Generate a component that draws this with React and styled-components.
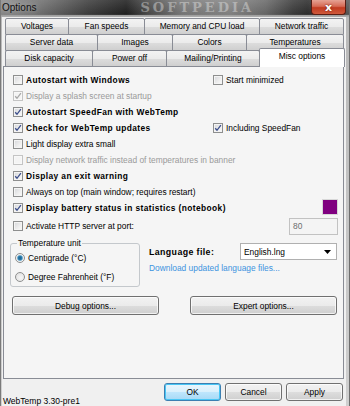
import styled, { createGlobalStyle } from 'styled-components';

const GlobalStyle = createGlobalStyle`
  html, body {
    margin: 0;
    padding: 0;
  }
  body {
    width: 350px;
    height: 406px;
    overflow: hidden;
    font-family: "Liberation Sans", Arial, sans-serif;
    font-size: 8.4px;
    color: #000;
    background: #9a9a9a;
  }
`;

const tabRows = [
  [
    { label: 'Voltages', w: 64 },
    { label: 'Fan speeds', w: 77 },
    { label: 'Memory and CPU load', w: 116 },
    { label: 'Network traffic', w: 85 },
  ],
  [
    { label: 'Server data', w: 93 },
    { label: 'Images', w: 76 },
    { label: 'Colors', w: 75 },
    { label: 'Temperatures', w: 98 },
  ],
  [
    { label: 'Disk capacity', w: 88 },
    { label: 'Power off', w: 75 },
    { label: 'Mailing/Printing', w: 94 },
    { label: 'Misc options', w: 86, active: true },
  ],
];

const options = [
  { label: 'Autostart with Windows', bold: true, right: { label: 'Start minimized' } },
  { label: 'Display a splash screen at startup', checked: true, disabled: true },
  { label: 'Autostart SpeedFan with WebTemp', bold: true, checked: true },
  { label: 'Check for WebTemp updates', bold: true, checked: true, right: { label: 'Including SpeedFan', checked: true } },
  { label: 'Light display extra small' },
  { label: 'Display network traffic instead of temperatures in banner', disabled: true },
  { label: 'Display an exit warning', bold: true, checked: true },
  { label: 'Always on top (main window; requires restart)' },
  { label: 'Display battery status in statistics (notebook)', bold: true, checked: true, swatch: '#800080' },
  { label: 'Activate HTTP server at port:', port: '80' },
];

const Check = ({ checked, disabled, bold, label }) => (
  <CheckLabel $disabled={disabled} $bold={bold}>
    <Box $disabled={disabled}>
      {checked && (
        <svg width="8" height="8" viewBox="0 0 8 8">
          <path
            d="M1.2 4.3 L3 6.3 L6.9 1.2"
            fill="none"
            stroke={disabled ? '#a8a8a8' : '#3d4f8c'}
            strokeWidth="1.3"
          />
        </svg>
      )}
    </Box>
    {label}
  </CheckLabel>
);

const Radio = ({ checked, label }) => (
  <RadioRow>
    <RadioCircle $checked={checked} />
    {label}
  </RadioRow>
);

export default function App() {
  return (
    <>
      <GlobalStyle />
      <Window>
        <TitleBar>
          <Title>Options</Title>
          <Watermark>SOFTPEDIA</Watermark>
          <CloseButton>x</CloseButton>
        </TitleBar>
        <Client>
          <Tabs>
            {tabRows.map((row, i) => (
              <TabRow key={i}>
                {row.map(tab => (
                  <Tab key={tab.label} $w={tab.w} $active={tab.active}>
                    {tab.label}
                  </Tab>
                ))}
              </TabRow>
            ))}
          </Tabs>
          <Panel>
            <OptionList>
              {options.map(opt => (
                <OptionRow key={opt.label}>
                  <Check {...opt} />
                  {opt.right && <Check {...opt.right} />}
                  {opt.swatch && <Swatch $color={opt.swatch} />}
                  {opt.port && <PortInput>{opt.port}</PortInput>}
                </OptionRow>
              ))}
            </OptionList>
            <LowerSection>
              <GroupBox>
                <Legend>Temperature unit</Legend>
                <Radio checked label="Centigrade (°C)" />
                <Radio label="Degree Fahrenheit (°F)" />
              </GroupBox>
              <LanguageColumn>
                <LanguageRow>
                  <BoldLabel>Language file:</BoldLabel>
                  <Combo>
                    English.lng
                    <svg width="7" height="4" viewBox="0 0 7 4">
                      <path d="M0 0 H7 L3.5 4 Z" fill="#000" />
                    </svg>
                  </Combo>
                </LanguageRow>
                <Link>Download updated language files...</Link>
              </LanguageColumn>
            </LowerSection>
            <PanelButtons>
              <Button $w={147}>Debug options...</Button>
              <Button $w={147}>Expert options...</Button>
            </PanelButtons>
          </Panel>
          <BottomBar>
            <Status>WebTemp 3.30-pre1</Status>
            <DialogButtons>
              <Button $w={57} $h={18} $default>OK</Button>
              <Button $w={57} $h={18}>Cancel</Button>
              <Button $w={57} $h={18}>Apply</Button>
            </DialogButtons>
          </BottomBar>
        </Client>
      </Window>
    </>
  );
}

const Window = styled.div`
  width: 350px;
  height: 406px;
  box-sizing: border-box;
  display: flex;
  flex-direction: column;
  background: linear-gradient(to bottom, #b8b8b8, #cfcfcf);
  border-left: 1px solid #7a7a7a;
  border-right: 1px solid #6f6f6f;
`;

const TitleBar = styled.div`
  height: 17px;
  flex: none;
  display: flex;
  align-items: flex-start;
  overflow: hidden;
  background:
    linear-gradient(to bottom, rgba(255, 255, 255, 0.12), rgba(0, 0, 0, 0.05) 85%, #9a9a9a 88%, #b0b0b0),
    linear-gradient(to right, #8a8a8a 0%, #6f6f6f 12%, #3e3e3e 25%, #202020 36%, #4a4a4a 42%, #7a7a7a 52%, #858585 66%, #6a6a6a 76%, #3c3c3c 84%, #2e2e2e 88%, #5a5a5a 100%);
`;

const Title = styled.div`
  font-size: 10px;
  line-height: 15px;
  padding-left: 1px;
  color: #111;
  text-shadow: 0 0 6px rgba(255, 255, 255, 0.6);
`;

const Watermark = styled.div`
  margin-left: 104px;
  font-family: "DejaVu Serif", serif;
  font-weight: bold;
  font-size: 13px;
  line-height: 15px;
  letter-spacing: 3px;
  color: rgba(235, 235, 235, 0.42);
`;

const CloseButton = styled.div`
  margin-left: auto;
  margin-right: 3px;
  width: 35px;
  height: 15px;
  box-sizing: border-box;
  display: flex;
  align-items: center;
  justify-content: center;
  border: 1px solid #5a1d14;
  border-top: none;
  border-radius: 0 0 4px 4px;
  background: linear-gradient(to bottom, #e6a294 0%, #d66a55 45%, #c13a20 55%, #d05a3c 100%);
  color: #fff;
  font-family: "DejaVu Sans", sans-serif;
  font-weight: bold;
  font-size: 11px;
  line-height: 11px;
  text-shadow: 0 0 2px #5a1008;
`;

const Client = styled.div`
  flex: 1;
  display: flex;
  flex-direction: column;
  margin: 0 3px 0 1px;
  padding-top: 1px;
  background: #f0f0f0;
`;

const Tabs = styled.div`
  display: flex;
  flex-direction: column;
  padding-left: 3px;
`;

const TabRow = styled.div`
  display: flex;
  height: 17px;
  margin-bottom: -1px;
`;

const Tab = styled.div`
  width: ${p => p.$w}px;
  height: ${p => (p.$active ? 19 : 17)}px;
  margin-top: ${p => (p.$active ? -2 : 0)}px;
  box-sizing: border-box;
  flex: none;
  position: relative;
  z-index: ${p => (p.$active ? 2 : 1)};
  border: 1px solid #898c95;
  border-bottom: ${p => (p.$active ? 'none' : '1px solid #898c95')};
  border-radius: 2px 2px 0 0;
  background: ${p =>
    p.$active ? '#ffffff' : 'linear-gradient(to bottom, #f3f3f3 0%, #ebebeb 50%, #dddddd 51%, #cfcfcf 100%)'};
  text-align: center;
  line-height: ${p => (p.$active ? 14 : 15)}px;
  white-space: nowrap;
  & + & {
    margin-left: -1px;
  }
`;

const Panel = styled.div`
  height: 313px;
  flex: none;
  box-sizing: border-box;
  margin: 0 2px 0 1px;
  padding: 5px 5px 0 6px;
  border: 1px solid #898c95;
  background: #f5f5f5;
  display: flex;
  flex-direction: column;
`;

const OptionList = styled.div`
  display: flex;
  flex-direction: column;
  margin-left: 3px;
`;

const OptionRow = styled.div`
  height: 16px;
  display: grid;
  grid-template-columns: 200px 1fr;
  align-items: center;
`;

const CheckLabel = styled.label`
  display: flex;
  align-items: center;
  gap: 3px;
  white-space: nowrap;
  font-weight: ${p => (p.$bold ? 'bold' : 'normal')};
  letter-spacing: ${p => (p.$bold ? '0.4px' : '0')};
  color: ${p => (p.$disabled ? '#9a9a9a' : '#000')};
`;

const Box = styled.span`
  width: 10px;
  height: 10px;
  box-sizing: border-box;
  flex: none;
  display: flex;
  align-items: center;
  justify-content: center;
  border: 1px solid ${p => (p.$disabled ? '#c4c4c4' : '#8e8f8f')};
  background: ${p =>
    p.$disabled ? '#f4f4f4' : 'linear-gradient(135deg, #d4d6d9 0%, #eeeeee 60%, #fbfbfb 100%)'};
  box-shadow: inset 0 0 0 1px ${p => (p.$disabled ? '#f8f8f8' : '#f4f4f4')};
`;

const Swatch = styled.div`
  grid-column: 2;
  justify-self: end;
  width: 16px;
  height: 16px;
  margin-top: -2px;
  box-sizing: border-box;
  border: 1px solid #d8d8d8;
  background: ${p => p.$color};
`;

const PortInput = styled.div`
  grid-column: 2;
  justify-self: end;
  width: 49px;
  height: 17px;
  margin-top: 2px;
  box-sizing: border-box;
  padding-left: 3px;
  border: 1px solid #c2c2c2;
  background: #f4f4f4;
  color: #6d6d6d;
  line-height: 15px;
`;

const LowerSection = styled.div`
  display: flex;
  margin-top: 6px;
`;

const GroupBox = styled.fieldset`
  width: 130px;
  box-sizing: border-box;
  margin: 0;
  padding: 0 0 0 4px;
  min-width: 0;
  border: 1px solid #c4c8cc;
  border-radius: 3px;
`;

const Legend = styled.legend`
  padding: 0 1px;
  margin-left: 2px;
  line-height: 10px;
`;

const RadioRow = styled.label`
  height: 19px;
  display: flex;
  align-items: center;
  gap: 3px;
  white-space: nowrap;
`;

const RadioCircle = styled.span`
  width: 10px;
  height: 10px;
  box-sizing: border-box;
  flex: none;
  border-radius: 50%;
  border: 1px solid #8e8f8f;
  background: ${p =>
    p.$checked
      ? 'radial-gradient(circle, #1c5f8c 0%, #2b7fb0 35%, #9fc6dc 50%, #f2f2f2 62%)'
      : 'radial-gradient(circle at 60% 60%, #f6f6f6 0%, #dcdcdc 100%)'};
`;

const LanguageColumn = styled.div`
  display: flex;
  flex-direction: column;
  margin-left: 9px;
  padding-top: 5px;
`;

const LanguageRow = styled.div`
  display: flex;
  align-items: center;
`;

const BoldLabel = styled.div`
  width: 91px;
  font-weight: bold;
  letter-spacing: 0.4px;
  font-size: 8.8px;
`;

const Combo = styled.div`
  width: 97px;
  height: 17px;
  box-sizing: border-box;
  display: flex;
  align-items: center;
  justify-content: space-between;
  padding: 0 5px 0 3px;
  border: 1px solid #b0b0b0;
  background: #fff;
`;

const Link = styled.div`
  margin-top: 2px;
  line-height: 12px;
  color: #3c93df;
`;

const PanelButtons = styled.div`
  display: flex;
  gap: 31px;
  margin: 9px 0 0 2px;
`;

const Button = styled.div`
  width: ${p => p.$w}px;
  height: ${p => p.$h || 19}px;
  box-sizing: border-box;
  display: flex;
  align-items: center;
  justify-content: center;
  border: 1px solid ${p => (p.$default ? '#3c7fb1' : '#707070')};
  border-radius: 3px;
  background: ${p =>
    p.$default
      ? 'linear-gradient(to bottom, #eaf6fd 0%, #d9f0fc 50%, #bee6fd 51%, #a7d9f5 100%)'
      : 'linear-gradient(to bottom, #f2f2f2 0%, #ebebeb 50%, #dddddd 51%, #cfcfcf 100%)'};
  box-shadow: inset 0 0 0 1px ${p => (p.$default ? '#48c6f5' : 'rgba(255, 255, 255, 0.7)')};
  white-space: nowrap;
`;

const BottomBar = styled.div`
  flex: 1;
  display: flex;
  justify-content: space-between;
  align-items: flex-start;
  padding: 4px 3px 0 1px;
`;

const Status = styled.div`
  margin-top: 13px;
  line-height: 10px;
  font-size: 8.5px;
`;

const DialogButtons = styled.div`
  display: flex;
  gap: 4px;
`;
